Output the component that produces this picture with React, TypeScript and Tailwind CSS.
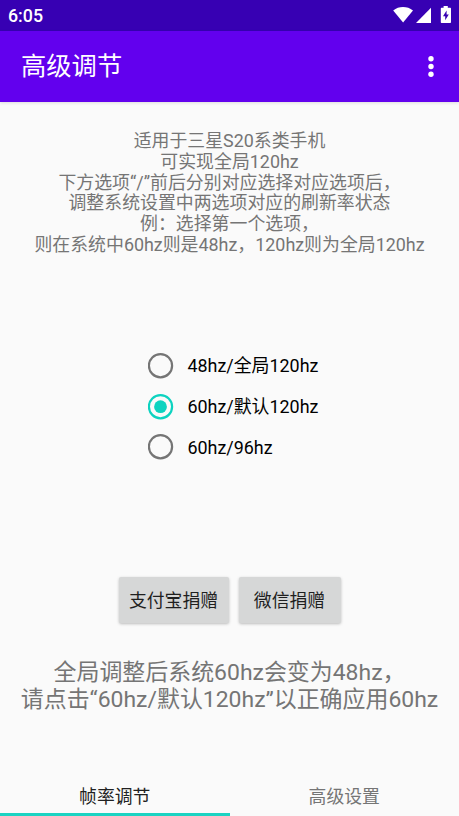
import { useState } from 'react';
import clsx from 'clsx';

const description = [
  '适用于三星S20系类手机',
  '可实现全局120hz',
  '下方选项“/”前后分别对应选择对应选项后，',
  '调整系统设置中两选项对应的刷新率状态',
  '例：选择第一个选项，',
  '则在系统中60hz则是48hz，120hz则为全局120hz',
];

const notice = ['全局调整后系统60hz会变为48hz，', '请点击“60hz/默认120hz”以正确应用60hz'];

const rates = ['48hz/全局120hz', '60hz/默认120hz', '60hz/96hz'];

const tabs = ['帧率调节', '高级设置'];

function StatusBar() {
  return (
    <div className="flex h-[31px] items-center justify-between bg-[#3700b3] pr-[7px] pl-[8px] text-white">
      <span className="text-[17.8px] leading-none font-medium">6:05</span>
      <svg width="60" height="31" viewBox="0 0 60 31" fill="currentColor" aria-hidden="true">
        <path d="M1.2 10.4C6.8 5.8 15.200 5.800 21 10.4L11.100 22.600z" />
        <path d="M39 7.700V23H24z" />
        <path
          fillRule="evenodd"
          d="M51.600 6h4.200v1.800h2.200c.6 0 1 .4 1 1V22c0 .6-.4 1-1 1h-8.200c-.6 0-1-.4-1-1V8.800c0-.6.4-1 1-1h1.800zM54.600 10.600l-3.600 5.700h2.200v4l3.600-5.800h-2.200z"
        />
      </svg>
    </div>
  );
}

function AppBar() {
  return (
    <header className="flex h-[71px] items-center justify-between bg-[#6200ee] pr-[25px] pl-[21px] text-white shadow-[0_1px_3px_rgba(0,0,0,0.12)]">
      <h1 className="pt-px text-[25.3px] leading-[30px]">高级调节</h1>
      <button type="button" aria-label="菜单">
        <svg width="6" height="22" viewBox="0 0 6 22" fill="currentColor">
          <circle cx="3" cy="2.800" r="2.700" />
          <circle cx="3" cy="10.500" r="2.700" />
          <circle cx="3" cy="18.200" r="2.700" />
        </svg>
      </button>
    </header>
  );
}

interface RadioProps {
  label: string;
  checked: boolean;
  onSelect: () => void;
}

function Radio({ label, checked, onSelect }: RadioProps) {
  return (
    <button
      type="button"
      role="radio"
      aria-checked={checked}
      onClick={onSelect}
      className="flex h-[40.8px] items-center gap-[14px] text-left"
    >
      <svg
        width="26"
        height="26"
        viewBox="0 0 26 26"
        className={clsx('shrink-0', checked ? 'text-[#0dd3c0]' : 'text-[#757575]')}
      >
        <circle cx="12.500" cy="12.700" r="11.600" fill="none" stroke="currentColor" strokeWidth="2.200" />
        {checked && <circle cx="12.500" cy="12.700" r="6.400" fill="currentColor" />}
      </svg>
      <span className="text-[17.9px] leading-[21px] text-black">{label}</span>
    </button>
  );
}

export default function App() {
  const [rate, setRate] = useState(1);
  const [tab, setTab] = useState(0);

  return (
    <div className="flex h-[816px] w-[459px] flex-col overflow-hidden bg-[#fafafa] font-['Roboto','Noto_Sans_CJK_SC',sans-serif]">
      <StatusBar />
      <AppBar />

      <main className="flex flex-1 flex-col items-center">
        <div className="mt-[29px] text-center text-[17.9px] leading-[20.8px] whitespace-nowrap text-[#757575]">
          {description.map((line) => (
            <p key={line}>{line}</p>
          ))}
        </div>

        <div role="radiogroup" className="mt-[89.6px] flex w-[164px] flex-col whitespace-nowrap">
          {rates.map((label, i) => (
            <Radio key={label} label={label} checked={rate === i} onSelect={() => setRate(i)} />
          ))}
        </div>

        <div className="mt-[109px] flex gap-[10px] text-[17.85px] text-[#1f1f1f]">
          <button
            type="button"
            className="h-[46px] w-[110px] rounded-[2px] bg-[#d6d7d7] pt-[3px] shadow-[0_1px_3px_rgba(0,0,0,0.25)]"
          >
            支付宝捐赠
          </button>
          <button
            type="button"
            className="h-[46px] w-[102px] rounded-[2px] bg-[#d6d7d7] pt-[3px] shadow-[0_1px_3px_rgba(0,0,0,0.25)]"
          >
            微信捐赠
          </button>
        </div>

        <div className="mt-[36px] text-center text-[22.95px] leading-[27px] whitespace-nowrap text-[#757575]">
          {notice.map((line) => (
            <p key={line}>{line}</p>
          ))}
        </div>
      </main>

      <nav className="flex h-[41px]">
        {tabs.map((label, i) => (
          <button
            key={label}
            type="button"
            onClick={() => setTab(i)}
            className={clsx(
              'flex flex-1 justify-center border-b-[3px] pt-[11px] text-[17.85px] leading-[21px]',
              tab === i ? 'border-[#1ad3c2] text-[#212121]' : 'border-transparent text-[#757575]'
            )}
          >
            {label}
          </button>
        ))}
      </nav>
    </div>
  );
}
